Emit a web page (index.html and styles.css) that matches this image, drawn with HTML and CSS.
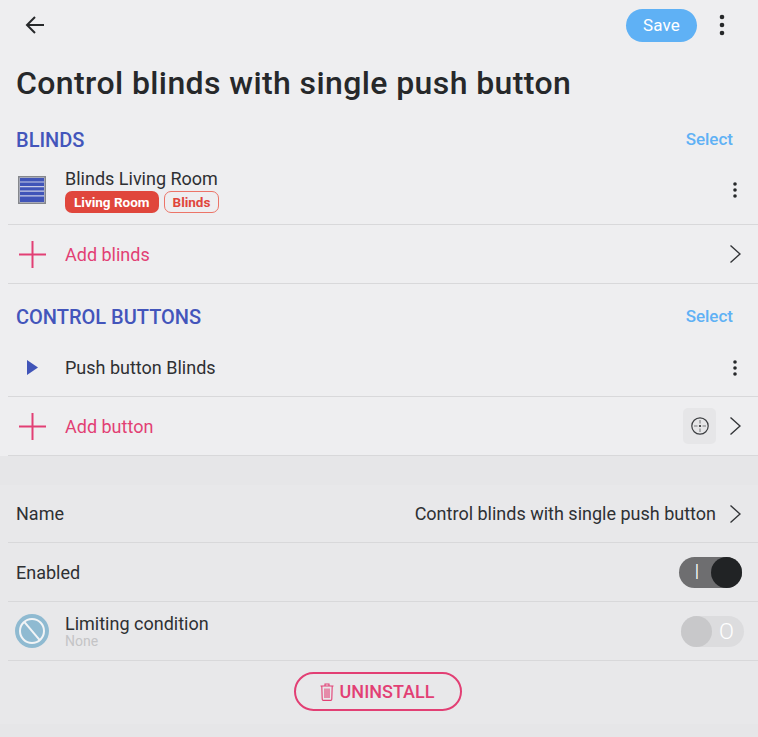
FILE: index.html
```html
<!DOCTYPE html>
<html lang="en">
<head>
    <meta charset="UTF-8">
    <meta name="viewport" content="width=device-width, initial-scale=1.0">
    <title>Control blinds with single push button</title>
    <link rel="stylesheet" href="styles.css">
</head>
<body>
    <header class="topbar">
        <svg class="back-icon" viewBox="0 0 20 20" width="20" height="20"><path d="M19 10H2M10 2l-8 8 8 8" fill="none" stroke="#26282a" stroke-width="2"/></svg>
        <button class="save-btn">Save</button>
        <svg class="menu-icon" viewBox="0 0 6 22" width="6" height="22"><circle cx="3" cy="3" r="2.3"/><circle cx="3" cy="11" r="2.3"/><circle cx="3" cy="19" r="2.3"/></svg>
    </header>

    <h1 class="title">Control blinds with single push button</h1>

    <div class="section-head section-blinds">
        <h2>BLINDS</h2>
        <a class="select-link">Select</a>
    </div>
    <div class="row row-device">
        <span class="row-icon">
            <svg viewBox="0 0 28 28" width="28" height="28">
                <rect x="0.75" y="0.75" width="26.5" height="26.5" fill="#c9cce6" stroke="#85878c" stroke-width="1.5"/>
                <path d="M2 2h24v3.4H2zM2 6.6h24v3.4H2zM2 11.2h24v3.4H2zM2 15.800h24v3.4H2zM2 20.400h24v5.600H2z" fill="#4054b8"/>
            </svg>
        </span>
        <div class="row-text">
            <div class="row-name">Blinds Living Room</div>
            <div class="tags">
                <span class="tag tag-room">Living Room</span>
                <span class="tag tag-type">Blinds</span>
            </div>
        </div>
        <svg class="dots" viewBox="0 0 4 16" width="4" height="16"><circle cx="2" cy="2" r="1.8"/><circle cx="2" cy="8" r="1.8"/><circle cx="2" cy="14" r="1.8"/></svg>
    </div>
    <div class="row row-add">
        <span class="row-icon">
            <svg viewBox="0 0 27 27" width="27" height="27"><path d="M13.500 0v27M0 13.500h27" stroke="#e23f74" stroke-width="2"/></svg>
        </span>
        <span class="add-label">Add blinds</span>
        <svg class="chevron" viewBox="0 0 12 20" width="12" height="20"><path d="M1.5 1.5L11 10l-9.500 8.500" fill="none" stroke="#333538" stroke-width="1.4"/></svg>
    </div>

    <div class="section-head section-buttons">
        <h2>CONTROL BUTTONS</h2>
        <a class="select-link">Select</a>
    </div>
    <div class="row row-button">
        <span class="row-icon">
            <svg viewBox="0 0 11 15" width="11" height="15"><path d="M0 0l11 7.500-11 7.500z" fill="#4054b8"/></svg>
        </span>
        <span class="row-name row-grow">Push button Blinds</span>
        <svg class="dots" viewBox="0 0 4 16" width="4" height="16"><circle cx="2" cy="2" r="1.8"/><circle cx="2" cy="8" r="1.8"/><circle cx="2" cy="14" r="1.8"/></svg>
    </div>
    <div class="row row-add">
        <span class="row-icon">
            <svg viewBox="0 0 27 27" width="27" height="27"><path d="M13.500 0v27M0 13.500h27" stroke="#e23f74" stroke-width="2"/></svg>
        </span>
        <span class="add-label">Add button</span>
        <span class="scan-btn">
            <svg viewBox="0 0 18 18" width="18" height="18">
                <circle cx="9" cy="9" r="8.200" fill="none" stroke="#3c3e41" stroke-width="1.200"/>
                <circle cx="9" cy="9" r="1.100" fill="#26282a"/>
                <path d="M9 3v3.500M9 11.500v3.500M3 9h3.500M11.500 9h3.500" stroke="#77787b" stroke-width="1"/>
            </svg>
        </span>
        <svg class="chevron" viewBox="0 0 12 20" width="12" height="20"><path d="M1.5 1.5L11 10l-9.500 8.500" fill="none" stroke="#333538" stroke-width="1.4"/></svg>
    </div>

    <div class="band"></div>

    <div class="settings">
        <div class="row row-setting">
            <span class="setting-label">Name</span>
            <span class="setting-value">Control blinds with single push button</span>
            <svg class="chevron" viewBox="0 0 12 20" width="12" height="20"><path d="M1.5 1.5L11 10l-9.500 8.500" fill="none" stroke="#333538" stroke-width="1.4"/></svg>
        </div>
        <div class="row row-setting">
            <span class="setting-label">Enabled</span>
            <span class="toggle toggle-on"><span class="toggle-mark">I</span><span class="knob"></span></span>
        </div>
        <div class="row row-limit">
            <span class="limit-icon">
                <svg viewBox="0 0 34 34" width="34" height="34">
                    <circle cx="17" cy="17" r="17" fill="#8fbad1"/>
                    <circle cx="17" cy="17" r="12" fill="none" stroke="#f2f4f6" stroke-width="2"/>
                    <path d="M8.500 8.500l17 17" transform="rotate(5 17 17)" stroke="#f2f4f6" stroke-width="2"/>
                </svg>
            </span>
            <div class="row-text">
                <div class="row-name">Limiting condition</div>
                <div class="row-sub">None</div>
            </div>
            <span class="toggle toggle-off"><span class="knob"></span><span class="toggle-mark">O</span></span>
        </div>
        <div class="uninstall-wrap">
            <button class="uninstall-btn">
                <svg viewBox="0 0 14 18" width="14" height="18"><path d="M0.500 3h13M5 3V1h4v2M1.800 3l.4 13.200a1.200 1.200 0 0 0 1.200 1.200h7.200a1.200 1.200 0 0 0 1.200-1.200L12.200 3M5 5.500v9.500M7 5.500v9.500M9 5.500v9.500" fill="none" stroke="#e23f74" stroke-width="1.100"/></svg>
                UNINSTALL
            </button>
        </div>
    </div>
    <div class="footer-strip"></div>
</body>
</html>
```

FILE: styles.css
```css
* {
    box-sizing: border-box;
}
body {
    margin: 0;
    height: 737px;
    overflow: hidden;
    font-family: Roboto, sans-serif;
    background-color: #eeeef0;
    color: #2a2c2e;
    display: flex;
    flex-direction: column;
}
.topbar {
    height: 50px;
    display: flex;
    align-items: center;
    padding: 0 33px 0 25px;
}
.back-icon {
    margin-right: auto;
}
.save-btn {
    width: 71px;
    height: 33px;
    margin-right: 22px;
    border: none;
    border-radius: 17px;
    background-color: #5fb1f5;
    color: #fff;
    font-family: inherit;
    font-size: 17px;
    font-weight: 400;
    letter-spacing: 0.2px;
}
.menu-icon {
    fill: #26282a;
}
.title {
    margin: 13px 0 0 16px;
    height: 40px;
    font-size: 32px;
    line-height: 40px;
    font-weight: 500;
    letter-spacing: 0.4px;
    color: #26282a;
}
.section-head {
    display: flex;
    justify-content: space-between;
    align-items: center;
    padding: 0 25px 0 16px;
    height: 28px;
}
.section-blinds {
    margin-top: 23px;
}
.section-buttons {
    margin-top: 19px;
}
.section-head h2 {
    margin: 0;
    font-size: 20px;
    font-weight: 500;
    color: #4355bb;
}
.select-link {
    margin-bottom: 2px;
    font-size: 17px;
    font-weight: 500;
    color: #5fb1f5;
}
.row {
    display: flex;
    align-items: center;
    margin-left: 8px;
    padding-right: 17px;
    border-bottom: 1px solid #d8d8da;
}
.row-device {
    height: 71px;
    padding-top: 2px;
}
.row-add {
    height: 59px;
}
.row-button {
    height: 66px;
    padding-top: 8px;
}
.row-icon {
    width: 48px;
    margin-right: 9px;
    display: flex;
    justify-content: center;
    flex-shrink: 0;
}
.row-text {
    flex: 1;
}
.row-name {
    font-size: 18px;
    line-height: 21px;
    color: #2e3033;
}
.row-grow {
    flex: 1;
}
.tags {
    display: flex;
    gap: 5px;
    margin-top: 2px;
}
.tag {
    height: 22px;
    border-radius: 7px;
    padding: 0 9px;
    font-size: 13.500px;
    line-height: 22px;
    font-weight: 700;
}
.tag-room {
    background-color: #e0463c;
    color: #fff;
}
.tag-type {
    border: 1px solid #ec7468;
    padding: 0 8px;
    line-height: 20px;
    color: #e0463c;
}
.dots {
    margin-right: 4px;
    fill: #26282a;
}
.add-label {
    flex: 1;
    font-size: 18px;
    color: #e23f74;
}
.chevron {
    flex-shrink: 0;
}
.scan-btn {
    width: 33px;
    height: 36px;
    margin-right: 13px;
    border-radius: 5px;
    background-color: #e6e6e8;
    display: flex;
    align-items: center;
    justify-content: center;
}
.band {
    height: 29px;
    background-color: #e6e6e8;
}
.settings {
    background-color: #e8e8ea;
}
.row-setting {
    height: 58px;
}
.row-setting + .row-setting {
    height: 59px;
}
.setting-label {
    flex: 1;
    margin-left: 8px;
    font-size: 18px;
    color: #2e3033;
}
.setting-value {
    margin-right: 13px;
    font-size: 18px;
    color: #2e3033;
}
.toggle {
    height: 31px;
    border-radius: 16px;
    display: flex;
    align-items: center;
}
.knob {
    width: 31px;
    height: 31px;
    border-radius: 50%;
    flex-shrink: 0;
}
.toggle-mark {
    flex: 1;
    text-align: center;
    color: #fff;
}
.toggle-on {
    width: 63px;
    margin-right: -1px;
    background-color: #6e6e70;
}
.toggle-on .toggle-mark {
    padding-left: 4px;
    font-size: 20px;
    font-weight: 300;
}
.toggle-on .knob {
    background-color: #212325;
}
.toggle-off {
    width: 63px;
    margin-right: -3px;
    background-color: #dcdcde;
}
.toggle-off .toggle-mark {
    padding-right: 3px;
    font-size: 22px;
    font-weight: 300;
}
.toggle-off .knob {
    background-color: #c8c8ca;
}
.row-limit {
    height: 59px;
}
.limit-icon {
    margin-left: 7px;
    margin-right: 16px;
    display: flex;
}
.row-sub {
    font-size: 14px;
    line-height: 15px;
    color: #c4c4c6;
}
.uninstall-wrap {
    height: 63px;
    display: flex;
    justify-content: center;
    padding: 11px 2px 0 0;
}
.uninstall-btn {
    width: 168px;
    height: 39px;
    padding: 0 8px 0 6px;
    border: 2px solid #e23f74;
    border-radius: 20px;
    background: transparent;
    display: flex;
    align-items: center;
    justify-content: center;
    gap: 6px;
    font-family: inherit;
    font-size: 18px;
    font-weight: 500;
    color: #e23f74;
}
.footer-strip {
    flex: 1;
    background-color: #e6e6e8;
}
```
